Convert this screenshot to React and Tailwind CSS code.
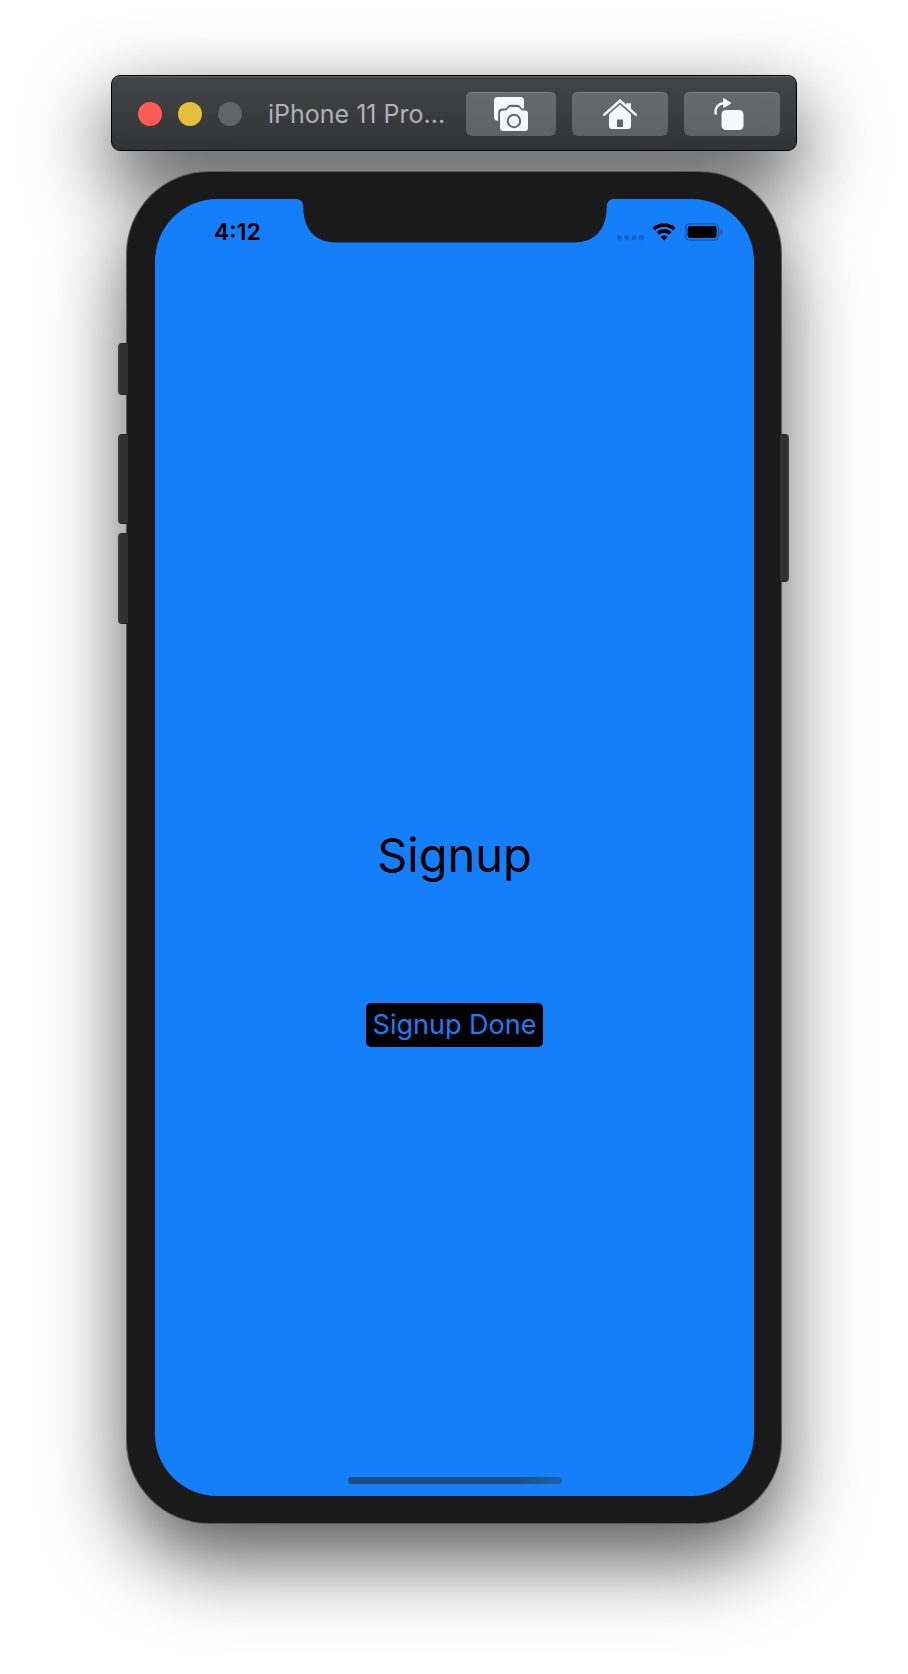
function TrafficLights() {
  return (
    <div className="flex shrink-0 gap-4">
      <button type="button" aria-label="Close" className="size-6 rounded-full bg-[#ff5b56]" />
      <button type="button" aria-label="Minimize" className="size-6 rounded-full bg-[#e5bf3c]" />
      <button type="button" aria-label="Zoom" disabled className="size-6 rounded-full bg-[#636466]" />
    </div>
  );
}

function CameraIcon() {
  return (
    <svg width="34" height="34" viewBox="0 0 34 34" aria-hidden="true">
      <path
        d="M3.5 0H26.5Q30 0 30 3.5V11.5H28L25.5 8.5Q24.7 7.8 23.5 7.8H16.5Q15.3 7.8 14.5 8.5L12 11.4H8.5Q4.2 11.4 4.2 15.7V24Q0 23.5 0 20.5V3.5Q0 0 3.5 0Z"
        fill="#f8f9fc"
      />
      <path
        d="M9 13.6H12.2L15.2 10.6Q16 9.9 17 9.9H23.2Q24.2 9.9 25 10.6L28 13.6H31Q34 13.6 34 16.6V31Q34 34 31 34H9Q6 34 6 31V16.6Q6 13.6 9 13.6Z"
        fill="#f8f9fc"
      />
      <circle cx="20" cy="24" r="6.2" fill="none" stroke="#646567" strokeWidth="2" />
    </svg>
  );
}

function HomeIcon() {
  return (
    <svg width="34" height="30" viewBox="0 0 34 30" aria-hidden="true">
      <path d="M23.3 4.2H28V12L23.3 7.5Z" fill="#f8f9fc" />
      <path d="M1.3 15.6L17 1.7L32.7 15.6" fill="none" stroke="#f8f9fc" strokeWidth="2.6" strokeLinecap="round" />
      <path
        d="M17 5.6L28 15.3V27Q28 30 25 30H9Q6 30 6 27V15.3ZM14 20.5V28H20V20.5Z"
        fill="#f8f9fc"
        fillRule="evenodd"
      />
    </svg>
  );
}

function RotateIcon() {
  return (
    <svg width="30" height="32" viewBox="0 0 30 32" aria-hidden="true">
      <path d="M2 16.5C0.2 10.5 4 5.2 10.5 5.2" fill="none" stroke="#f8f9fc" strokeWidth="2.4" />
      <path d="M9.5 0.5V9.6L17 5.2Z" fill="#f8f9fc" stroke="#f8f9fc" strokeLinejoin="round" />
      <rect x="7.5" y="12" width="22" height="20" rx="4.5" fill="#f8f9fc" />
    </svg>
  );
}

function ToolButton({ label, className, children }) {
  return (
    <button
      type="button"
      aria-label={label}
      className={`flex h-11 items-center justify-center rounded-md bg-linear-to-b from-[#68696b] to-[#626365] shadow-[inset_0_1px_0_#7c7d7f] ${className}`}
    >
      {children}
    </button>
  );
}

function TitleBar() {
  return (
    <header className="flex h-[76px] w-full max-w-[686px] items-center rounded-[9px] border border-black bg-linear-to-b from-[#434547] to-[#333436] pt-[2px] pr-4 pl-[26px] shadow-[inset_0_1px_0_#66686a,0_32px_80px_rgba(0,0,0,0.75)]">
      <TrafficLights />
      <h1 className="ml-[26px] min-w-0 flex-1 whitespace-nowrap text-[25px] leading-8 text-[#b1b2b4]">
        iPhone 11 Pro...
      </h1>
      <div className="flex shrink-0 gap-4">
        <ToolButton label="Screenshot" className="w-[90px]">
          <CameraIcon />
        </ToolButton>
        <ToolButton label="Home" className="w-24">
          <HomeIcon />
        </ToolButton>
        <ToolButton label="Rotate" className="w-24 pr-[6px]">
          <RotateIcon />
        </ToolButton>
      </div>
    </header>
  );
}

function Notch() {
  return (
    <svg width="320" height="44" viewBox="0 0 320 44" aria-hidden="true">
      <path
        d="M0 0C6 0 8 2.5 8.3 9C8.5 29 19 43.5 41 43.5H279C301 43.5 311.5 29 311.7 9C312 2.5 314 0 320 0Z"
        fill="#1a1a1a"
      />
    </svg>
  );
}

function StatusIcons() {
  return (
    <svg width="106" height="18" viewBox="0 0 106 18" role="img" aria-label="Wi-Fi connected, battery full">
      <g fill="#1366c8">
        <rect x="0" y="12.3" width="5" height="5" rx="1.6" />
        <rect x="7.3" y="12.3" width="5" height="5" rx="1.6" />
        <rect x="14.6" y="12.3" width="5" height="5" rx="1.6" />
        <rect x="21.9" y="12.3" width="5" height="5" rx="1.6" />
      </g>
      <g fill="none" stroke="#000" strokeWidth="3.6">
        <path d="M36.8 6.1A15 15 0 0 1 57.4 6.1" />
        <path d="M40.9 10.4A9 9 0 0 1 53.3 10.4" />
      </g>
      <path d="M47.1 17.6L43.6 13.9A4.8 4.8 0 0 1 50.6 13.9Z" />
      <rect x="68.6" y="0.9" width="33" height="16.2" rx="4.4" fill="none" stroke="#1057ad" strokeWidth="1.4" />
      <rect x="70.6" y="3" width="29" height="12" rx="2.4" />
      <path d="M103.6 6.2Q105.6 7 105.6 9T103.6 11.8Z" fill="#1057ad" />
    </svg>
  );
}

function StatusBar() {
  return (
    <div className="grid h-[44px] grid-cols-[1fr_auto_1fr]">
      <div className="flex items-end pb-px pl-[59px]">
        <time className="text-[23px] leading-5 font-semibold">4:12</time>
      </div>
      <Notch />
      <div className="flex items-end pb-[2px] pl-[2px]">
        <StatusIcons />
      </div>
    </div>
  );
}

function Phone() {
  return (
    <section
      aria-label="iPhone 11 Pro"
      className="relative w-full max-w-[654px] rounded-[82px] bg-[#1a1a1a] py-[27px] pr-[27px] pl-7 shadow-[0_0_0_1px_#5c5c5c,0_36px_80px_rgba(0,0,0,0.65)]"
    >
      <span className="absolute top-[171px] -left-[9px] h-[52px] w-[10px] rounded-l-[4px] border-y border-l-2 border-[#232323] border-l-[#3a3a3a] bg-[#303030]" />
      <span className="absolute top-[262px] -left-[9px] h-[90px] w-[10px] rounded-l-[4px] border-y border-l-2 border-[#232323] border-l-[#3a3a3a] bg-[#303030]" />
      <span className="absolute top-[361px] -left-[9px] h-[91px] w-[10px] rounded-l-[4px] border-y border-l-2 border-[#232323] border-l-[#3a3a3a] bg-[#303030]" />
      <span className="absolute top-[262px] -right-[8px] h-[148px] w-[9px] rounded-r-[4px] border-y border-r-2 border-[#232323] border-r-[#3a3a3a] bg-[#303030]" />
      <div className="flex min-h-[1297px] flex-col overflow-hidden rounded-[62px] bg-[#157efb] text-black">
        <StatusBar />
        <main className="flex flex-1 flex-col items-center justify-center gap-[118px] pt-[151px]">
          <h2 className="text-[47px] leading-[60px]">Signup</h2>
          <button type="button" className="h-11 rounded-[5px] bg-black px-[7px] text-[27px] leading-8 text-[#157efb]">
            Signup Done
          </button>
        </main>
        <div className="mb-3 h-[7px] w-[214px] self-center rounded-full bg-linear-to-r from-[#1e4f83] from-80% to-[#1c5fab]" />
      </div>
    </section>
  );
}

export default function App() {
  return (
    <div className="flex min-h-screen flex-col items-center gap-[21px] overflow-hidden bg-white px-8 pt-[75px] pb-[151px] font-['Inter','Liberation_Sans',sans-serif]">
      <TitleBar />
      <Phone />
    </div>
  );
}
